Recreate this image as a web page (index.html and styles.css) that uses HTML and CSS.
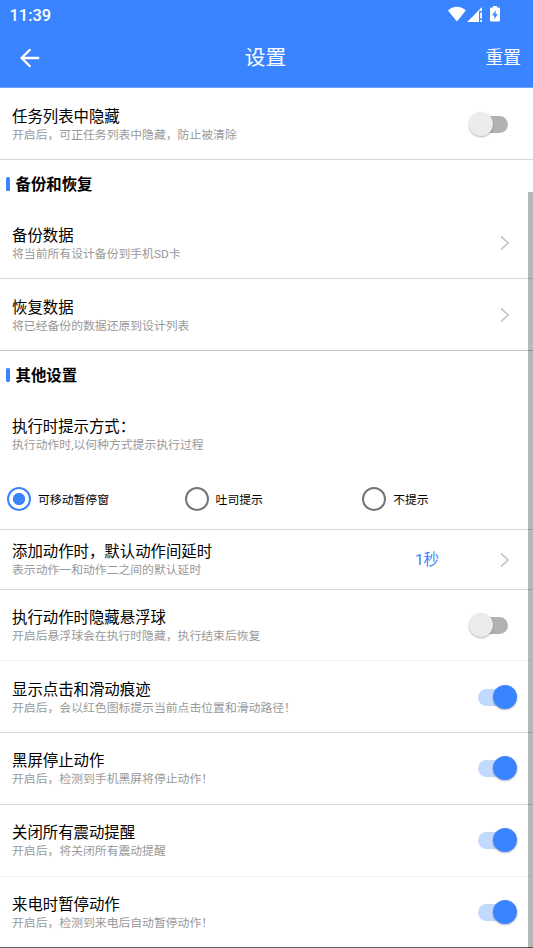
FILE: index.html
```html
<!DOCTYPE html>
<html lang="zh-CN">
<head>
<meta charset="utf-8">
<title>设置</title>
<link rel="stylesheet" href="styles.css">
</head>
<body>
<div class="screen">
  <header class="header">
    <div class="status">
      <span class="clock">11:39</span>
      <svg class="status-icons" width="54" height="18" viewBox="0 0 54 18" fill="#fff">
        <path d="M0 5.6C5.2 0.6 12.6 0.6 17.8 5.6L8.9 16.6z"/>
        <path d="M19.2 17L34 2V6H31V17zM32.2 7.5H34V13.5H32.2zM32.2 15H34V17H32.2z"/>
        <path fill-rule="evenodd" d="M45 1H49V2.5H51Q52 2.5 52 3.5V15.5Q52 16.5 51 16.5H43Q42 16.5 42 15.5V3.5Q42 2.5 43 2.5H45zM47.6 5.2L44.2 10.4H46.4V14.2L49.8 9H47.6z"/>
      </svg>
    </div>
    <div class="toolbar">
      <svg class="back" width="20" height="20" viewBox="0 0 20 20"><path d="M19.2 10H2M10.4 1.2L1.6 10L10.4 18.8"/></svg>
      <h1>设置</h1>
      <span class="reset">重置</span>
    </div>
  </header>

  <main>
    <div class="row">
      <div class="text"><div class="title">任务列表中隐藏</div><div class="sub">开启后，可正任务列表中隐藏，防止被清除</div></div>
      <span class="switch"></span>
    </div>

    <h2 class="section">备份和恢复</h2>
    <div class="row">
      <div class="text"><div class="title">备份数据</div><div class="sub">将当前所有设计备份到手机SD卡</div></div>
      <svg class="chevron" width="10" height="16" viewBox="0 0 10 16"><path d="M1 1.4L8 8L1 14.6"/></svg>
    </div>
    <div class="row strong">
      <div class="text"><div class="title">恢复数据</div><div class="sub">将已经备份的数据还原到设计列表</div></div>
      <svg class="chevron" width="10" height="16" viewBox="0 0 10 16"><path d="M1 1.4L8 8L1 14.6"/></svg>
    </div>

    <h2 class="section">其他设置</h2>
    <div class="group">
      <div class="text"><div class="title">执行时提示方式：</div><div class="sub">执行动作时,以何种方式提示执行过程</div></div>
      <div class="radios">
        <span class="option"><i class="radio checked"></i>可移动暂停窗</span>
        <span class="option"><i class="radio"></i>吐司提示</span>
        <span class="option"><i class="radio"></i>不提示</span>
      </div>
    </div>
    <div class="row compact">
      <div class="text"><div class="title">添加动作时，默认动作间延时</div><div class="sub">表示动作一和动作二之间的默认延时</div></div>
      <span class="value">1秒</span>
      <svg class="chevron" width="10" height="16" viewBox="0 0 10 16"><path d="M1 1.4L8 8L1 14.6"/></svg>
    </div>
    <div class="row short raised faint">
      <div class="text"><div class="title">执行动作时隐藏悬浮球</div><div class="sub">开启后悬浮球会在执行时隐藏，执行结束后恢复</div></div>
      <span class="switch"></span>
    </div>
    <div class="row">
      <div class="text"><div class="title">显示点击和滑动痕迹</div><div class="sub">开启后，会以红色图标提示当前点击位置和滑动路径！</div></div>
      <span class="switch on"></span>
    </div>
    <div class="row raised">
      <div class="text"><div class="title">黑屏停止动作</div><div class="sub">开启后，检测到手机黑屏将停止动作！</div></div>
      <span class="switch on"></span>
    </div>
    <div class="row raised faint">
      <div class="text"><div class="title">关闭所有震动提醒</div><div class="sub">开启后，将关闭所有震动提醒</div></div>
      <span class="switch on"></span>
    </div>
    <div class="row short raised last">
      <div class="text"><div class="title">来电时暂停动作</div><div class="sub">开启后，检测到来电后自动暂停动作！</div></div>
      <span class="switch on"></span>
    </div>
  </main>
  <div class="scrollbar"></div>
</div>
</body>
</html>
```

FILE: styles.css
```css
* { box-sizing: border-box; }
body {
  margin: 0;
  background: #fff;
  color: #000;
  font-family: Roboto, "Noto Sans CJK SC", sans-serif;
}
.screen {
  position: relative;
  width: 533px;
  height: 948px;
  overflow: hidden;
}
.header {
  height: 88px;
  background: #3a84ff;
  border-bottom: 1px solid #69a2ff;
  color: #fff;
}
.status {
  height: 30px;
  padding: 5px 31px 0 9.5px;
  display: flex;
  justify-content: space-between;
}
.clock {
  padding-top: 1px;
  font-size: 16.4px;
  font-weight: 500;
  line-height: 20px;
}
.toolbar {
  height: 56px;
  padding: 0 12px 0 20px;
  display: grid;
  grid-template-columns: 58px 1fr 68px;
  align-items: center;
}
.back path {
  fill: none;
  stroke: #fff;
  stroke-width: 2.3;
}
h1 {
  margin: 0;
  font-size: 20.7px;
  font-weight: 400;
  line-height: 30px;
  text-align: center;
}
.reset {
  font-size: 17.7px;
  line-height: 26px;
  text-align: right;
}
.row {
  height: 72px;
  padding: 18px 16px 0 12px;
  border-bottom: 1px solid #d8d8d8;
  display: flex;
  align-items: flex-start;
}
.text {
  flex: 1;
  white-space: nowrap;
}
.title {
  padding-top: 1px;
  font-size: 15.4px;
  line-height: 20px;
}
.sub {
  margin-top: -1px;
  color: #999;
  font-size: 11.84px;
  line-height: 18px;
}
.strong { border-color: #c4c4c4; }
.faint { border-color: #efefef; }
.short { height: 71px; }
.raised { padding-top: 17px; }
.last { border-color: #666; }
.compact {
  height: 60px;
  padding-top: 11px;
}
.section {
  height: 47px;
  margin: 0;
  padding: 0 0 2px 6px;
  display: flex;
  align-items: center;
  gap: 5.5px;
  font-size: 15.4px;
  font-weight: 700;
}
.section::before {
  content: "";
  width: 4px;
  height: 14px;
  margin-top: 2px;
  border-radius: 1.5px;
  background: #3a84ff;
}
.group {
  height: 132px;
  padding: 18px 0 0 12px;
  border-bottom: 1px solid #d4d4d4;
}
.radios {
  margin: 33.5px 0 0 -5px;
  display: grid;
  grid-template-columns: repeat(3, 177.6px);
}
.option {
  display: flex;
  align-items: center;
  gap: 7px;
  font-size: 11.84px;
  line-height: 24px;
}
.radio {
  width: 24px;
  height: 24px;
  margin-top: -1px;
  border: 2.4px solid #757575;
  border-radius: 50%;
}
.radio.checked {
  border-color: #3a84ff;
  background: radial-gradient(circle, #3a84ff 5.8px, transparent 6.4px);
}
.switch {
  position: relative;
  width: 48px;
  height: 24px;
  margin-top: 6px;
}
.switch::before {
  content: "";
  position: absolute;
  left: 9px;
  top: 3.5px;
  width: 30px;
  height: 17px;
  border-radius: 9px;
  background: #b2b2b2;
}
.switch::after {
  content: "";
  position: absolute;
  left: 0.4px;
  top: 0;
  width: 24px;
  height: 24px;
  border-radius: 50%;
  background: #ececec;
  box-shadow: 0 1px 2px rgba(0, 0, 0, .3);
}
.switch.on::before { background: #c2d9ff; }
.switch.on::after {
  left: 24px;
  background: #3a84ff;
}
.chevron {
  margin: 10px 7px 0 0;
}
.chevron path {
  fill: none;
  stroke: #c4c4c4;
  stroke-width: 1.6;
}
.value {
  margin: 9px 61px 0 0;
  color: #3a84ff;
  font-size: 15.4px;
  line-height: 20px;
}
.compact .chevron { margin-top: 10.5px; }
.scrollbar {
  position: absolute;
  right: 0;
  top: 192px;
  width: 5px;
  bottom: 0;
  background: rgba(0, 0, 0, .28);
}
```
